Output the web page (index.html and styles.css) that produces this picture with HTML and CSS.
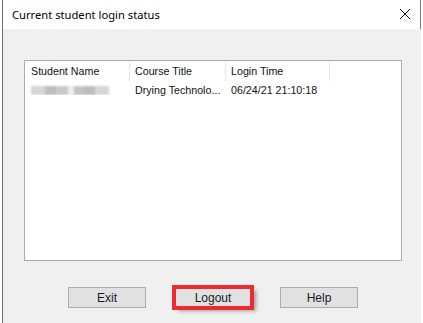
FILE: index.html
```html
<!DOCTYPE html>
<html lang="en">

<head>
    <meta charset="UTF-8">
    <link rel="stylesheet" href="styles.css">
</head>

<body>
    <div class="window">
        <div class="titlebar">
            <span class="title">Current student login status</span>
            <svg class="close" width="12" height="12" viewBox="0 0 12 12">
                <path d="M1 1 L11 11 M11 1 L1 11" stroke="#111" stroke-width="1" fill="none" />
            </svg>
        </div>

        <div class="content">
            <div class="listview">
                <div class="row header">
                    <div class="cell">Student Name</div>
                    <div class="cell">Course Title</div>
                    <div class="cell">Login Time</div>
                    <div class="cell last"></div>
                </div>
                <div class="row">
                    <div class="cell">
                        <span class="blurred">
                            <i class="b1"></i><i class="b2"></i><i class="b3"></i><i class="gap"></i><i class="b4"></i><i class="b2"></i><i class="b1"></i>
                        </span>
                    </div>
                    <div class="cell">Drying Technolo...</div>
                    <div class="cell">06/24/21 21:10:18</div>
                    <div class="cell last"></div>
                </div>
            </div>

            <div class="buttons">
                <button class="btn">Exit</button>
                <button class="btn marked">Logout</button>
                <button class="btn">Help</button>
            </div>
        </div>
    </div>
</body>

</html>
```

FILE: styles.css
```css
html,
body {
    margin: 0;
    background-color: #ffffff;
}

.window {
    margin-left: 2px;
    width: 418px;
    height: 323px;
    border-left: 1px solid #6e6e6e;
    display: flex;
    flex-direction: column;
}

.titlebar {
    height: 29px;
    background-color: #ffffff;
    border-right: 1px solid #7a7a7a;
    display: flex;
    align-items: center;
    justify-content: space-between;
    padding: 0 9px 0 9px;
    box-sizing: border-box;
}

.title {
    font-family: "Noto Sans", "Open Sans", sans-serif;
    font-size: 11.2px;
    color: #000000;
    margin-top: -1px;
}

.close {
    margin-top: -2px;
}

.content {
    flex: 1;
    background-color: #f0f0f0;
    padding: 31px 19px 0 21px;
    font-family: "Liberation Sans", Arial, sans-serif;
    font-size: 10.7px;
    color: #111111;
}

.listview {
    height: 201px;
    box-sizing: border-box;
    background-color: #ffffff;
    border: 1px solid #a9acb3;
    padding-top: 1px;
}

.row {
    display: grid;
    grid-template-columns: 105px 96px 104px 1fr;
    height: 19px;
    align-items: center;
}

.header .cell {
    height: 19px;
    line-height: 19px;
    border-right: 1px solid #e5e5e5;
}

.header .cell.last {
    border-right: none;
}

.cell {
    box-sizing: border-box;
    padding-left: 5px;
    white-space: nowrap;
    overflow: hidden;
}

.cell:first-child {
    padding-left: 6px;
}

.row + .row {
    height: 18px;
}

.blurred {
    display: flex;
    height: 9px;
    margin-top: 1px;
    filter: blur(0.8px);
}

.blurred i {
    display: block;
    height: 9px;
}

.blurred .b1 {
    width: 14px;
    background-color: #d6d6d6;
}

.blurred .b2 {
    width: 11px;
    background-color: #bdbdbd;
}

.blurred .b3 {
    width: 12px;
    background-color: #c9c9c9;
}

.blurred .gap {
    width: 6px;
    background-color: #eeeeee;
}

.blurred .b4 {
    width: 10px;
    background-color: #c4c4c4;
}

.buttons {
    display: flex;
    margin-top: 26px;
    padding-left: 44px;
    gap: 28px;
}

.btn {
    width: 78px;
    height: 21px;
    margin: 0;
    padding: 0;
    background-color: #e1e1e1;
    border: 1px solid #adadad;
    font-family: "Liberation Sans", Arial, sans-serif;
    font-size: 12px;
    color: #1a1a1a;
}

.btn.marked {
    outline: 4px solid #ee2a2e;
    outline-offset: -2px;
    box-shadow: 4px 3px 4px rgba(0, 0, 0, 0.35);
}
```
